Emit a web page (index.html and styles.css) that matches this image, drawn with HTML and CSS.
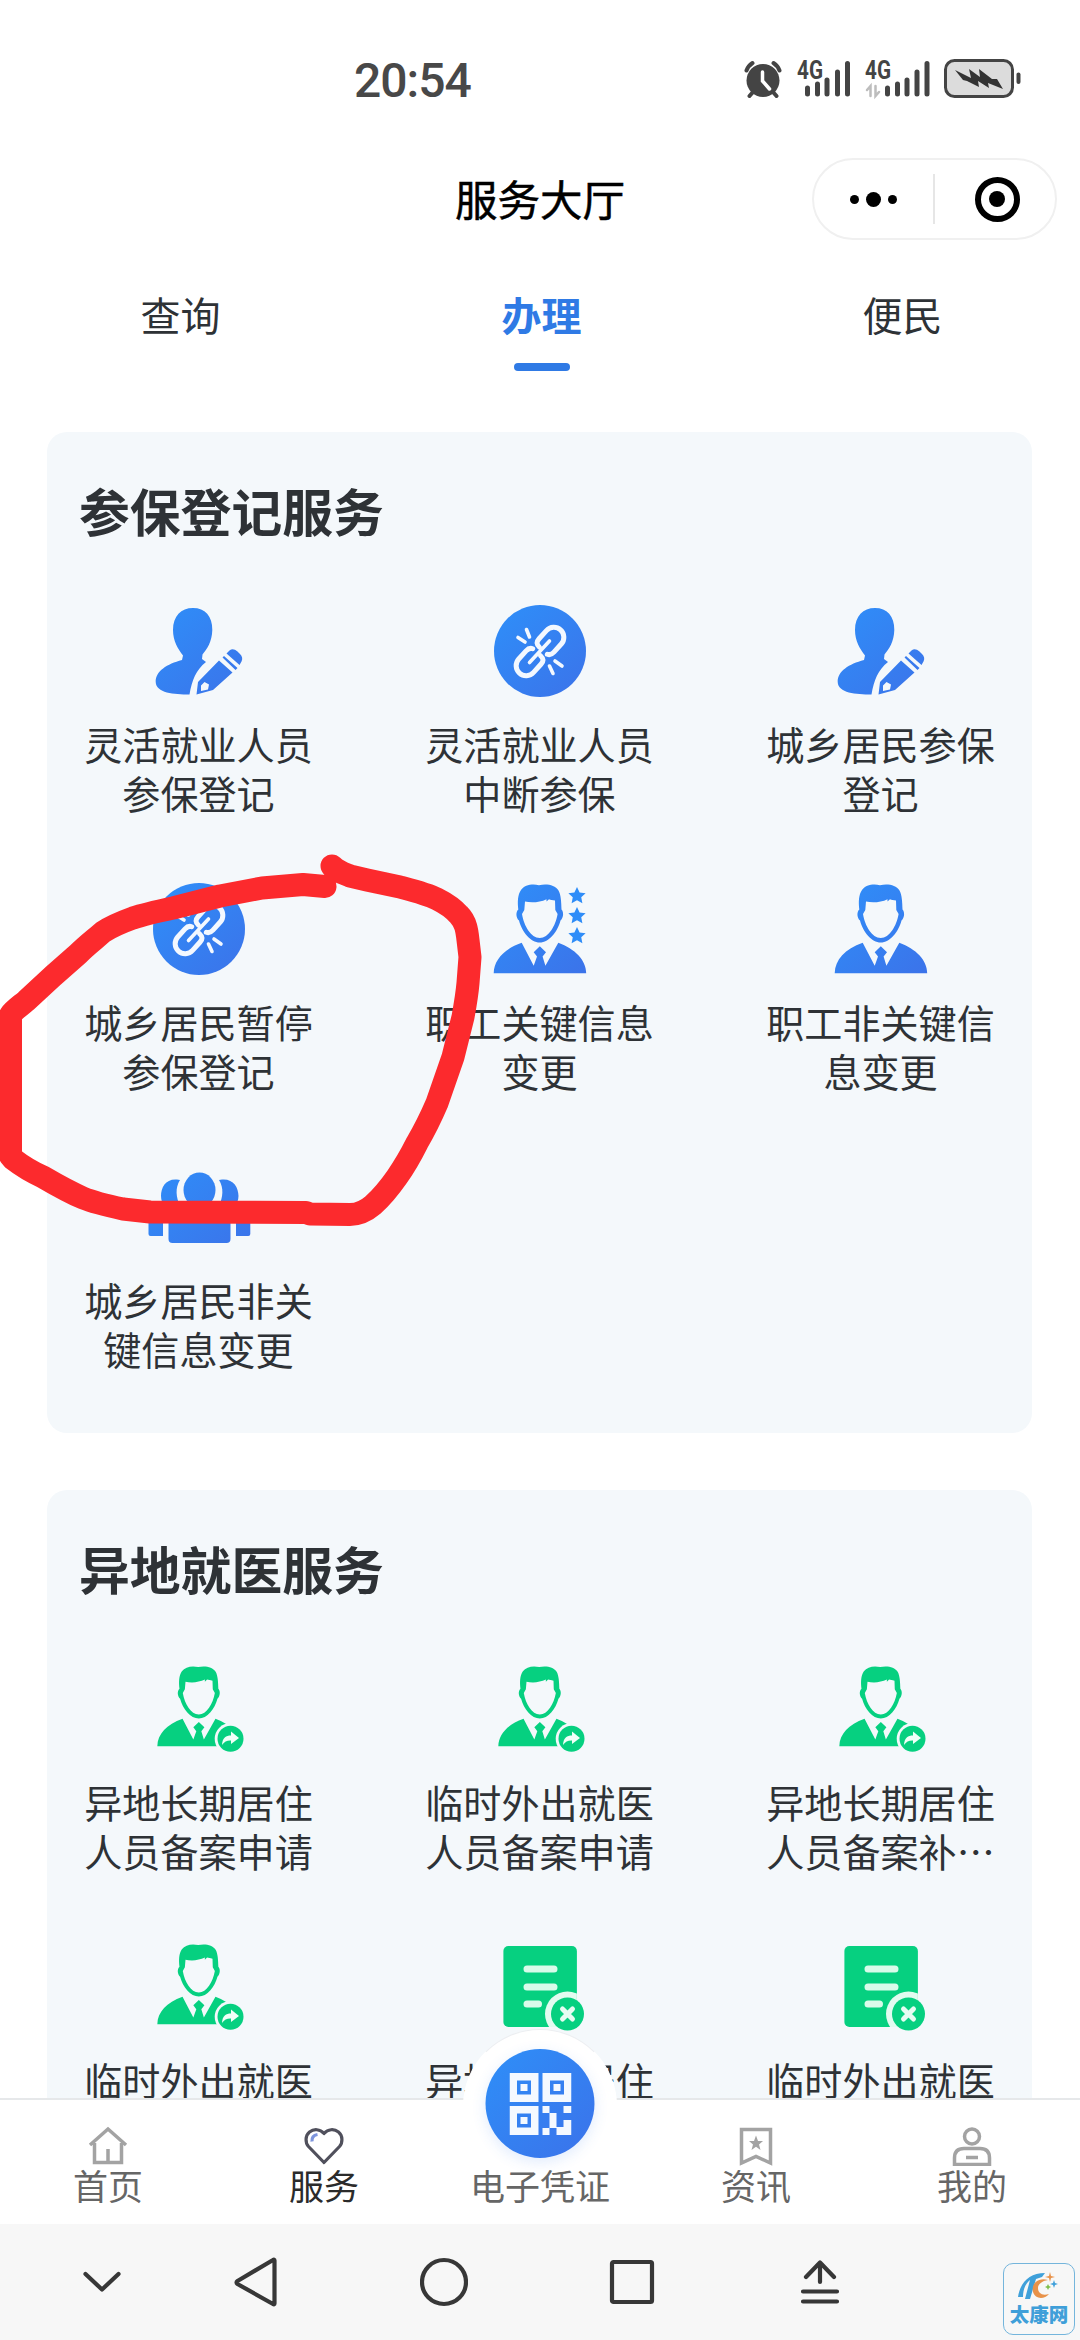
FILE: index.html
```html
<!DOCTYPE html>
<html lang="zh-CN">
<head>
<meta charset="utf-8">
<title>服务大厅</title>
<link rel="stylesheet" href="styles.css">
</head>
<body>
<svg class="sprite" width="0" height="0" aria-hidden="true">
  <defs>
    <linearGradient id="blue" gradientUnits="userSpaceOnUse" x1="15" y1="10" x2="90" y2="95">
      <stop offset="0" stop-color="#2f8df8"/><stop offset="1" stop-color="#3b74ea"/>
    </linearGradient>
    <clipPath id="sheet"><rect x="14.400" y="10" width="73.500" height="81" rx="5"/></clipPath>
    <symbol id="man" viewBox="0 0 102 102" overflow="visible">
      <path d="M4.7 95.2C5 82 15 71 32.7 64.8L44.7 87.8 48 78.5 44.7 74.2 50.8 68.3 57 74.2 53.6 78.5 56.4 87.8 69.3 64.8C86 71 97 82 97.2 95.2Z"/>
      <path fill-rule="evenodd" d="M29.3 31.500C28.500 24 28.500 17 32 12 35.500 7 43 5.600 50 7.200 58 5.600 66 7 69.500 12.500 72 17 72.300 24 72.500 31.500 75 34 74.500 40 71.500 42.500 68.500 54 60 64.500 50.800 64.500 41.500 64.500 33 54 30 42.500 27 40 26.500 34 29.300 31.500ZM36 23.500 35.300 32 33 36C35 48 42 60 50.800 60 59.500 60 66.500 48 68.600 36L66.300 32 66 22.500C63.500 22 61.500 21.800 60 21.200L57.500 23.500 57.500 21.200C51 24.500 42 25 36 23.500Z"/>
    </symbol>
    <symbol id="register" viewBox="0 0 102 102">
      <path d="M45 8C57 8 64.500 16 64.300 30 64 42 59 49 54.500 54.500L54 59 58 62C48 70 44 80 41.500 94.500 26 94.500 8 93 7.700 82 7.500 71 19 64 34 60L35 55.500C30 49 25 41 25 30 25 16 33 8 45 8Z"/>
      <path d="M48.500 94.500 50 82 71 60.500 84.500 72.500 65 90ZM53 85.500 53 91 60 89.500 61 84.500 56.500 82Z" fill-rule="evenodd"/>
      <path d="M74.500 57.500 76 56 89.500 68 87.500 70ZM78.500 53.500 81.500 50.500Q85 47.500 89.500 51.500L92 54Q95.500 57.500 93.500 61.500L91.500 65Z"/>
    </symbol>
    <symbol id="unlink" viewBox="0 0 102 102">
      <circle cx="51" cy="51" r="46"/>
      <g fill="none" stroke="#f3f8ff" stroke-width="5" stroke-linecap="round">
        <path transform="translate(61.500 41) rotate(-48)" d="M-12-4C-12-8.500-10-10-6-10H5A10 10 0 0 1 5 10H-6C-9 10-11 9-12 6.500"/>
        <path transform="translate(40.500 62) rotate(132)" d="M-12-4C-12-8.500-10-10-6-10H5A10 10 0 0 1 5 10H-6C-9 10-11 9-12 6.500"/>
        <path stroke-width="3.600" d="M40.500 62.500 60.500 41M29 37.500 36 42M37.500 29.500 40.500 37M60.500 66 64 73.500M66 61 73 66"/>
      </g>
    </symbol>
    <symbol id="group" viewBox="0 0 102 102" overflow="visible">
      <ellipse cx="51.500" cy="34" rx="16" ry="17.500"/>
      <path d="M29 23.500C18 22.500 13 31 13 40 13 48 19 56 26 56 29 55 31 53 32 50 28 41 27 32 32 24ZM74 23.500C85 22.500 90.500 31 90.500 40 90.500 48 84 56 77 56 74 55 72 53 71 50 75 41 76 32 71 24ZM20.500 83V66Q22 56 33 55H70Q81 56 82.500 66V83Q82.500 87 78.500 87H24.500Q20.500 87 20.500 83ZM.5 78V66Q1 58 9 58H18Q15 61 15 68V80H2.500Q.5 80 .5 78ZM102.300 78V66Q102 58 94 58H85Q88 61 88 68V80H100.300Q102.300 80 102.300 78Z"/>
    </symbol>
    <symbol id="star" viewBox="0 0 20 20" overflow="visible">
      <path d="M10 .5 12.900 6.800 19.600 7.500 14.700 12 16 18.700 10 15.400 4 18.700 5.300 12 .4 7.500 7.100 6.800Z"/>
    </symbol>
    <symbol id="man-key" viewBox="0 0 102 102" overflow="visible">
      <use href="#man"/>
      <use href="#star" x="79" y="8.500" width="18" height="18"/>
      <use href="#star" x="79" y="28.500" width="18" height="18"/>
      <use href="#star" x="79" y="48.500" width="18" height="18"/>
    </symbol>
    <symbol id="man-share" viewBox="0 0 102 102">
      <g transform="translate(5.100 2.500) scale(.9)"><use href="#man" width="102" height="102"/></g>
      <circle cx="82.500" cy="80.800" r="15.800" fill="#f4f8fb"/>
      <circle cx="82.500" cy="80.800" r="13"/>
      <path fill="#f0fff8" d="M74 87C74.500 79.500 78 77.500 83 77.500V73.500L91 80 83 86V82.500C79 82.300 76.500 83.500 74 87Z"/>
    </symbol>
    <symbol id="doc-cancel" viewBox="0 0 102 102">
      <rect x="14.400" y="10" width="73.500" height="81" rx="5"/>
      <path d="M38 33H65M38 51H65M38 68H49.500" stroke="#d9fbea" stroke-width="7" stroke-linecap="round"/>
      <circle cx="78.500" cy="78" r="22.500" fill="#e2fbf0" clip-path="url(#sheet)"/>
      <circle cx="78.500" cy="78" r="16.500"/>
      <path d="M73.500 73 83.500 83M83.500 73 73.500 83" stroke="#e6fcf2" stroke-width="5" stroke-linecap="round"/>
    </symbol>
  </defs>
</svg>

<div class="screen">
  <header class="status">
    <time class="clock">20:54</time>
    <div class="status-icons">
      <svg width="38" height="38" viewBox="0 0 38 38" fill="none" stroke="#444" stroke-width="4" stroke-linecap="round">
        <circle cx="19" cy="20.500" r="16.500" fill="#444" stroke="none"/>
        <path d="M2.500 10.500Q4 6 8.500 3M35.500 10.500Q34 6 29.500 3M9 32 5.500 36M29 32 32.500 36"/>
        <path d="M18.500 12V21L25.500 29" stroke="#fff" stroke-width="3.500"/>
      </svg>
      <svg class="signal" width="54" height="38" viewBox="0 0 54 38">
        <text x="0" y="19" textLength="26" lengthAdjust="spacingAndGlyphs">4G</text>
        <path d="M10.500 28V34M20.500 24V34M30 20V34M40.500 12V34M50.500 3.500V34"/>
      </svg>
      <svg class="signal second" width="65" height="38" viewBox="0 0 65 38">
        <text x="0" y="19" textLength="26" lengthAdjust="spacingAndGlyphs">4G</text>
        <path d="M22.500 28V34M32.500 24V34M42 20V34M52 12V34M62 3.500V34"/>
        <path class="data" d="M5.500 36V26L2 30M10.500 26V36L14 32"/>
      </svg>
      <svg class="battery" width="77" height="40" viewBox="0 0 77 40">
        <rect x="1.500" y="1.500" width="67" height="36" rx="9" fill="#dcdcdc" stroke="#444" stroke-width="3"/>
        <path d="M74.500 15.500V23" stroke="#444" stroke-width="4" stroke-linecap="round"/>
        <path fill="#333" d="M11 11 27 19 25 10 36 18 35 10 48 20 53 20 59 30 44 24 45 29 34 22 35 28 23 22 19 21Z"/>
      </svg>
    </div>
  </header>

  <div class="titlebar">
    <h1>服务大厅</h1>
    <div class="capsule">
      <span class="more"><i></i><i></i><i></i></span>
      <span class="close"><i></i></span>
    </div>
  </div>

  <nav class="tabs">
    <span>查询</span>
    <span class="active">办理</span>
    <span>便民</span>
  </nav>

  <main class="services">
    <section class="card blue">
      <h2>参保登记服务</h2>
      <div class="grid">
        <div class="item"><svg><use href="#register"/></svg><p>灵活就业人员参保登记</p></div>
        <div class="item"><svg><use href="#unlink"/></svg><p>灵活就业人员中断参保</p></div>
        <div class="item"><svg><use href="#register"/></svg><p>城乡居民参保登记</p></div>
        <div class="item"><svg><use href="#unlink"/></svg><p>城乡居民暂停参保登记</p></div>
        <div class="item"><svg><use href="#man-key"/></svg><p>职工关键信息变更</p></div>
        <div class="item"><svg><use href="#man"/></svg><p>职工非关键信息变更</p></div>
        <div class="item"><svg><use href="#group"/></svg><p>城乡居民非关键信息变更</p></div>
      </div>
    </section>
    <section class="card green">
      <h2>异地就医服务</h2>
      <div class="grid">
        <div class="item"><svg><use href="#man-share"/></svg><p>异地长期居住人员备案申请</p></div>
        <div class="item"><svg><use href="#man-share"/></svg><p>临时外出就医人员备案申请</p></div>
        <div class="item"><svg><use href="#man-share"/></svg><p>异地长期居住人员备案补…</p></div>
        <div class="item"><svg><use href="#man-share"/></svg><p>临时外出就医</p></div>
        <div class="item"><svg><use href="#doc-cancel"/></svg><p>异地长期居住</p></div>
        <div class="item"><svg><use href="#doc-cancel"/></svg><p>临时外出就医</p></div>
      </div>
    </section>
  </main>

  <nav class="tabbar">
    <a><svg width="40" height="40" viewBox="0 0 40 40" fill="none" stroke="#a3a3a3" stroke-width="3.500"><path d="M2 19 20 3 38 19M6.500 17V36.500H33.500V17M20 23V36"/></svg>首页</a>
    <a class="active"><svg width="40" height="40" viewBox="0 0 40 40" fill="none" stroke="#50505c" stroke-width="3.200" stroke-linejoin="round"><path d="M20 36.500 4.500 20.500C1 16.500 1.200 9.500 5.500 6 10 2.500 16 3 20 7.500 24 3 30 2.500 34.500 6 38.800 9.500 39 16.500 35.500 20.500Z"/><path d="M8 15.500Q7.500 9.500 13.500 8.500" stroke="#7d94dc"/></svg>服务</a>
    <a class="center">
      <span class="bump"></span>
      <span class="qr"><svg width="62" height="62" viewBox="0 0 62 62" fill="#f4f9ff" fill-rule="evenodd"><path d="M0 0H29V29H0ZM7.500 7.500V21.500H21.500V7.500ZM11 11H18V18H11ZM33 0H62V29H33ZM40.500 7.500V21.500H54.500V7.500ZM44 11H51V18H44ZM0 33H29V62H0ZM7.500 40.500V54.500H21.500V40.500ZM11 44H18V51H11ZM33 33H40V40H47V54H54V47H62V62H47V55H40V40H33ZM54 33H62V40H54ZM33 55H40V62H33Z"/></svg></span>
      <span class="label">电子凭证</span>
    </a>
    <a><svg width="40" height="40" viewBox="0 0 40 40" fill="none" stroke="#a3a3a3" stroke-width="3.500"><path d="M5.500 3.500H34.500V37L20 30.500 5.500 37Z"/><path fill="#a3a3a3" stroke="none" d="M20 9.500 22 15H27L23 18.500 24.500 24 20 20.800 15.500 24 17 18.500 13 15H18Z"/></svg>资讯</a>
    <a><svg width="40" height="40" viewBox="0 0 40 40" fill="none" stroke="#a3a3a3" stroke-width="3.500"><circle cx="20" cy="10.500" r="7.500"/><path d="M2.500 38.500V32Q2.500 22.500 12 22.500H28Q37.500 22.500 37.500 32V38.500ZM14 31.500H26"/></svg>我的</a>
  </nav>

  <footer class="sysnav">
    <svg width="48" height="50" viewBox="0 0 48 50"><path d="M7.500 17 24 32.500 40.500 17"/></svg>
    <svg width="48" height="50" viewBox="0 0 48 50"><path d="M42.500 3.500V46.500Q42.500 48 41 47L5.500 27Q3.500 25.500 5.500 24L41 3Q42.500 2 42.500 3.500Z"/></svg>
    <svg width="48" height="50" viewBox="0 0 48 50"><circle cx="24" cy="25" r="22"/></svg>
    <svg width="48" height="50" viewBox="0 0 48 50"><rect x="4" y="5" width="40" height="40" rx="1.500"/></svg>
    <svg width="48" height="50" viewBox="0 0 48 50"><path d="M24 25V6M10 20 24 5.500 38 20M7 34.500H41M7 44.500H41"/></svg>
  </footer>

  <svg class="scribble" width="500" height="400" viewBox="0 840 500 400">
    <path d="M332 866C338 872 345 874 350 876L367 880 400 887C415 891 427 894 437 899 447 904 453 908 459 915 466 922 467 931 468 940L470 957 468 983C467 995 465 1006 463 1017L453 1057 437 1103C431 1117 424 1131 417 1143 411 1155 404 1167 397 1177 390 1187 382 1197 373 1205 366 1211 359 1214.500 350 1214.500L310 1214 306 1212.500 150 1212 123 1209C109 1206 95 1203 83 1198 69 1192 55 1184 43 1177 32 1172 22 1166 13 1159L10.500 1156V1015C14 1010 20 1006 26 1001L53 976 78 954C87 945 94 940 103 932 112 926 122 922 133 918 145 914 159 911 173 908L220 896 262 888 303 884.500 325 886.500"/>
  </svg>

  <div class="watermark">
    <svg width="44" height="28" viewBox="0 0 44 28">
      <path fill="#3fa0da" d="M1 25C3 11 12 1 28 1L25 5 19 7 13 27H8L13 8C8 12 6 18 6 25Z"/>
      <path fill="#e8924a" d="M31 8C21 5 14 12 16 20 18 27 27 28 32 22 25 24 21 21 21 16 21 12 25 9 31 8ZM33 0 34 4 38 5 34 6 33 10 32 6 28 5 32 4Z"/>
      <path fill="#3fa0da" d="M37 8 38 11 41 12 38 13 37 16 36 13 33 12 36 11Z"/>
      <path fill="#7fbf4d" d="M31 12 32 14 34 15 32 16 31 18 30 16 28 15 30 14Z"/>
    </svg>
    <span>太康网</span>
  </div>
</div>
</body>
</html>
```
FILE: styles.css
```css
* { box-sizing: border-box; margin: 0; padding: 0; }

body {
  width: 1080px;
  height: 2340px;
  overflow: hidden;
  background: #fff;
  color: #2e3236;
  font-family: "Noto Sans CJK SC", "Noto Sans", sans-serif;
}

svg { display: block; flex: none; }
.sprite { position: absolute; }

.screen {
  position: relative;
  display: flex;
  flex-direction: column;
  width: 1080px;
  height: 2340px;
}

/* status bar */
.status {
  display: flex;
  align-items: center;
  justify-content: space-between;
  height: 158px;
  padding: 0 59px 0 354px;
}
.clock {
  padding-top: 3px;
  font: 500 48px/1 Roboto, sans-serif;
  letter-spacing: -1px;
  color: #484848;
}
.status-icons { display: flex; align-items: center; }
.signal { margin-left: 15px; overflow: visible; fill: none; stroke: #444; stroke-width: 5; stroke-linecap: round; }
.signal.second { margin-left: 14px; }
.signal text { font: 700 25px Roboto, sans-serif; fill: #444; stroke: none; }
.signal .data { stroke: #bdbdbd; stroke-width: 2.5; }
.battery { margin-left: 14px; }

/* title bar */
.titlebar {
  display: grid;
  grid-template-columns: 268px 1fr 245px;
  align-items: center;
  height: 82px;
  padding: 0 23px 0 0;
}
.titlebar h1 {
  grid-column: 2;
  margin-top: -3px;
  font-size: 42.5px;
  font-weight: 400;
  -webkit-text-stroke: 0.5px #000;
  line-height: 60px;
  text-align: center;
  color: #000;
}
.capsule {
  display: grid;
  grid-template-columns: 1fr 1fr;
  align-items: center;
  height: 82px;
  border: 2px solid #f0f0f0;
  border-radius: 41px;
}
.more {
  display: flex;
  align-items: center;
  justify-content: center;
  gap: 7px;
  height: 50px;
  border-right: 2px solid #e6e6e6;
}
.more i { width: 9px; height: 9px; border-radius: 50%; background: #000; }
.more i:nth-child(2) { width: 15px; height: 15px; }
.close {
  display: grid;
  place-items: center;
  justify-self: center;
  width: 45px;
  height: 45px;
  margin-left: 5px;
  border: 6px solid #000;
  border-radius: 50%;
}
.close i { width: 16px; height: 16px; border-radius: 50%; background: #000; }

/* top tabs */
.tabs {
  display: grid;
  grid-template-columns: repeat(3, 361px);
  height: 192px;
  padding-top: 44px;
}
.tabs span {
  display: flex;
  flex-direction: column;
  align-items: center;
  font-size: 40px;
  line-height: 60px;
}
.tabs .active { font-weight: 700; color: #2f7ae5; }
.tabs .active::after {
  content: "";
  width: 56px;
  height: 8px;
  margin-top: 19px;
  border-radius: 4px;
  background: #2f7ae5;
}

/* service cards */
.services {
  display: flex;
  flex: 1;
  flex-direction: column;
  gap: 57px;
  min-height: 0;
  padding: 0 48px 0 47px;
  overflow: hidden;
}
.card {
  flex: none;
  height: 1001px;
  padding: 40px 37px 0;
  border-radius: 20px;
  background: #f4f8fb;
}
.card h2 {
  margin-left: -5px;
  font-size: 50.8px;
  font-weight: 700;
  line-height: 76px;
}
.grid {
  display: grid;
  grid-template-columns: repeat(3, 229px);
  grid-auto-rows: 278px;
  justify-content: space-between;
  padding-top: 52px;
}
.item { display: flex; flex-direction: column; align-items: center; }
.item svg { width: 102px; height: 102px; overflow: visible; }
.item p {
  margin-top: 18px;
  font-size: 38.1px;
  line-height: 48.5px;
  text-align: center;
}
.blue .item svg { fill: url(#blue); }
.green .item svg { fill: #06d080; }

/* bottom tab bar */
.tabbar {
  display: grid;
  grid-template-columns: repeat(5, 1fr);
  height: 126px;
  border-top: 2px solid #e6e8ea;
  background: #fff;
}
.tabbar a {
  position: relative;
  display: flex;
  flex-direction: column;
  align-items: center;
  padding-top: 26px;
  font-size: 35px;
  line-height: 37px;
  color: #666;
}
.tabbar a.active { color: #2b2b2b; }
.tabbar .center { padding-top: 66px; }
.tabbar .label { position: relative; }
.bump, .qr {
  position: absolute;
  left: 50%;
  transform: translateX(-50%);
  border-radius: 50%;
}
.bump {
  top: -71px;
  width: 154px;
  height: 154px;
  background: #fff;
  border: 1px solid #eceef1;
  border-color: #eceef1 #fff #fff;
}
.qr {
  top: -51px;
  display: grid;
  place-items: center;
  width: 109px;
  height: 109px;
  background: linear-gradient(135deg, #2e8ff8, #3b72ea);
  box-shadow: 0 4px 14px rgba(60, 130, 245, .16);
}

/* system navigation */
.sysnav {
  display: grid;
  grid-template-columns: 120px repeat(4, 188px);
  place-items: center;
  height: 116px;
  padding-left: 42px;
  background: #f7f7f7;
}
.sysnav svg {
  fill: none;
  stroke: #373737;
  stroke-width: 4.2;
  stroke-linecap: round;
  stroke-linejoin: round;
}

/* overlays */
.scribble {
  position: absolute;
  top: 840px;
  left: 0;
  fill: none;
  stroke: #fc2a2d;
  stroke-width: 23;
  stroke-linecap: round;
  stroke-linejoin: round;
}
.watermark {
  position: absolute;
  top: 2263px;
  left: 1003px;
  display: flex;
  flex-direction: column;
  align-items: center;
  width: 72px;
  height: 72px;
  padding-top: 8px;
  border: 1px solid #74b5dc;
  border-radius: 10px;
  color: #3f9fd9;
  font-size: 19.5px;
  font-weight: 900;
  line-height: 28px;
}
```
